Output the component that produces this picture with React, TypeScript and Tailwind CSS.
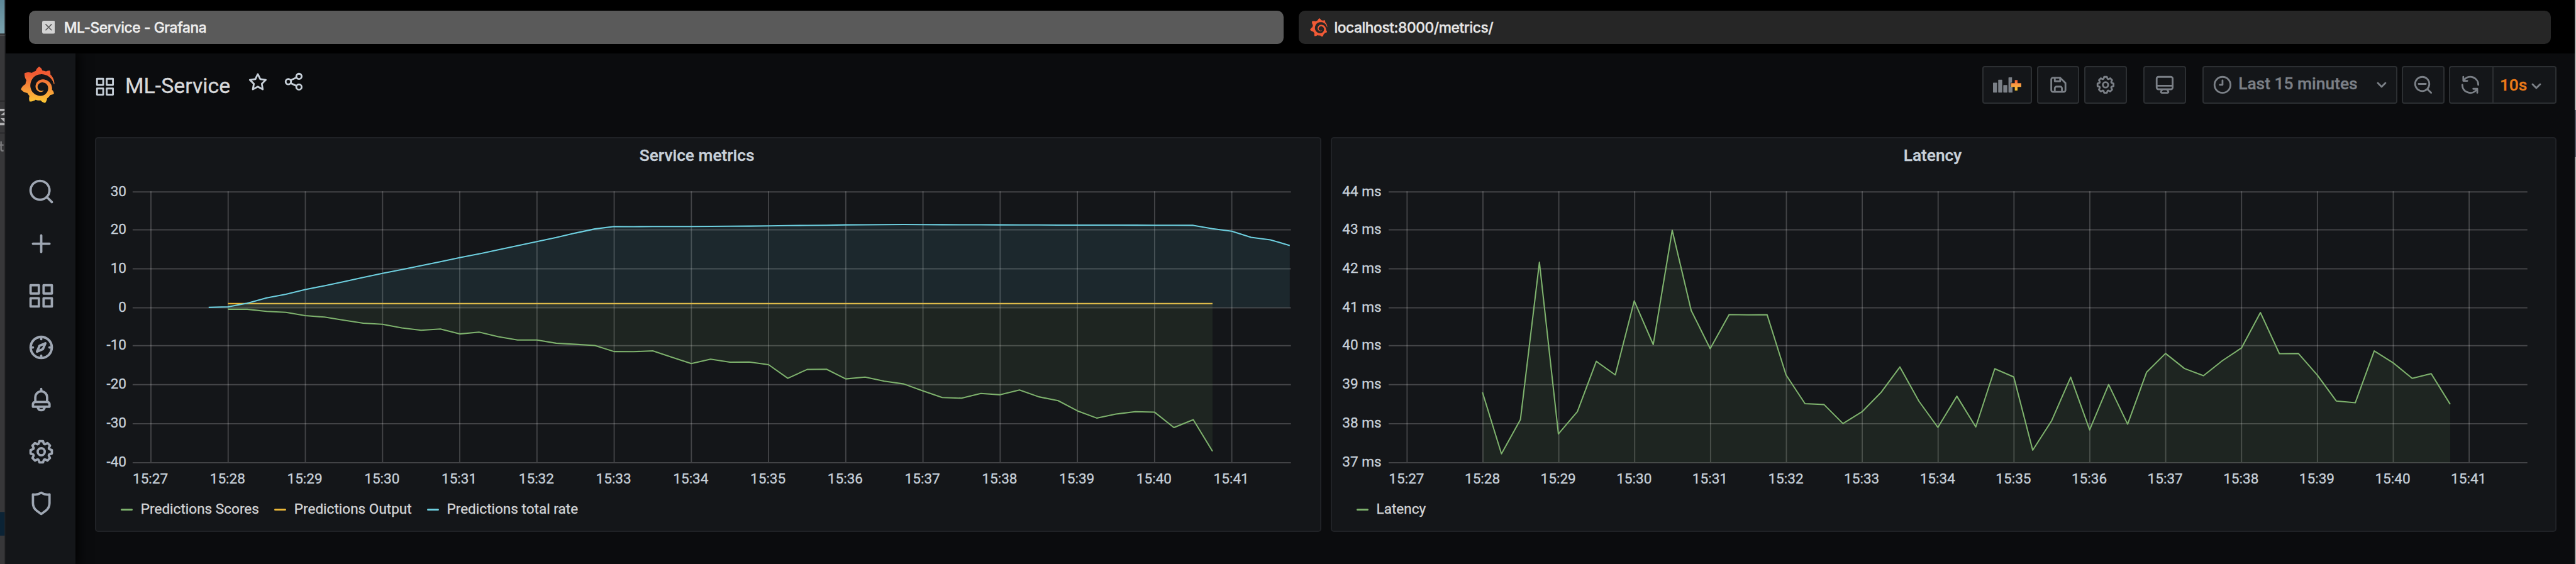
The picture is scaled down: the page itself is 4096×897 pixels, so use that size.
import type { ReactNode } from "react";

/* ---------- icon outlines (24 x 24 grid) ---------- */

const ICONS = {
  apps: "M10,13H3a1,1,0,0,0-1,1v7a1,1,0,0,0,1,1h7a1,1,0,0,0,1-1V14A1,1,0,0,0,10,13ZM9,20H4V15H9ZM21,2H14a1,1,0,0,0-1,1v7a1,1,0,0,0,1,1h7a1,1,0,0,0,1-1V3A1,1,0,0,0,21,2ZM20,9H15V4h5Zm1,4H14a1,1,0,0,0-1,1v7a1,1,0,0,0,1,1h7a1,1,0,0,0,1-1V14A1,1,0,0,0,21,13Zm-1,7H15V15h5ZM10,2H3A1,1,0,0,0,2,3v7a1,1,0,0,0,1,1h7a1,1,0,0,0,1-1V3A1,1,0,0,0,10,2ZM9,9H4V4H9Z",
  search:
    "M21.71,20.29,18,16.61A9,9,0,1,0,16.61,18l3.68,3.68a1,1,0,0,0,1.42,0A1,1,0,0,0,21.71,20.29ZM11,18a7,7,0,1,1,7-7A7,7,0,0,1,11,18Z",
  plus: "M19,11H13V5a1,1,0,0,0-2,0v6H5a1,1,0,0,0,0,2h6v6a1,1,0,0,0,2,0V13h6a1,1,0,0,0,0-2Z",
  compass:
    "M12,2A10,10,0,1,0,22,12,10,10,0,0,0,12,2Zm1,17.93V19a1,1,0,0,0-2,0v.93A8,8,0,0,1,4.07,13H5a1,1,0,0,0,0-2H4.07A8,8,0,0,1,11,4.07V5a1,1,0,0,0,2,0V4.07A8,8,0,0,1,19.93,11H19a1,1,0,0,0,0,2h.93A8,8,0,0,1,13,19.93ZM15.14,7.55l-5,2.12a1,1,0,0,0-.52.52l-2.12,5a1,1,0,0,0,.21,1.1,1,1,0,0,0,.7.29.93.93,0,0,0,.4-.08l5-2.12a1,1,0,0,0,.52-.52l2.12-5a1,1,0,0,0-1.31-1.31Zm-2.49,5.1-2.28,1,1-2.28,2.28-1Z",
  bell: "M18,13.18V10a6,6,0,0,0-5-5.91V3a1,1,0,0,0-2,0V4.09A6,6,0,0,0,6,10v3.18A3,3,0,0,0,4,16v2a1,1,0,0,0,1,1H8.14a4,4,0,0,0,7.72,0H19a1,1,0,0,0,1-1V16A3,3,0,0,0,18,13.18ZM8,10a4,4,0,0,1,8,0v3H8Zm4,10a2,2,0,0,1-1.72-1h3.44A2,2,0,0,1,12,20Zm6-3H6V16a1,1,0,0,1,1-1H17a1,1,0,0,1,1,1Z",
  cog: "M21.32,9.55l-1.89-.63.89-1.78A1,1,0,0,0,20.13,6L18,3.87a1,1,0,0,0-1.15-.19l-1.78.89-.63-1.89A1,1,0,0,0,13.5,2h-3a1,1,0,0,0-.95.68L8.92,4.57,7.14,3.68A1,1,0,0,0,6,3.87L3.87,6a1,1,0,0,0-.19,1.15l.89,1.78-1.89.63A1,1,0,0,0,2,10.5v3a1,1,0,0,0,.68.95l1.89.63-.89,1.78A1,1,0,0,0,3.87,18L6,20.13a1,1,0,0,0,1.15.19l1.78-.89.63,1.89a1,1,0,0,0,.95.68h3a1,1,0,0,0,.95-.68l.63-1.89,1.78.89A1,1,0,0,0,18,20.13L20.13,18a1,1,0,0,0,.19-1.15l-.89-1.78,1.89-.63A1,1,0,0,0,22,13.5v-3A1,1,0,0,0,21.32,9.55ZM20,12.78l-1.2.4A2,2,0,0,0,17.64,16l.57,1.14-1.1,1.1L16,17.64a2,2,0,0,0-2.79,1.16l-.4,1.2H11.22l-.4-1.2A2,2,0,0,0,8,17.64l-1.14.57-1.1-1.1L6.36,16A2,2,0,0,0,5.2,13.18L4,12.78V11.22l1.2-.4A2,2,0,0,0,6.36,8L5.79,6.89l1.1-1.1L8,6.36A2,2,0,0,0,10.82,5.2l.4-1.2h1.56l.4,1.2A2,2,0,0,0,16,6.36l1.14-.57,1.1,1.1L17.64,8a2,2,0,0,0,1.16,2.79l1.2.4ZM12,8a4,4,0,1,0,4,4A4,4,0,0,0,12,8Zm0,6a2,2,0,1,1,2-2A2,2,0,0,1,12,14Z",
  shield:
    "M19.63,3.65a1,1,0,0,0-.84-.2,8,8,0,0,1-6.22-1.27,1,1,0,0,0-1.14,0A8,8,0,0,1,5.21,3.45a1,1,0,0,0-.84.2A1,1,0,0,0,4,4.43v7.45a9,9,0,0,0,3.77,7.33l3.65,2.6a1,1,0,0,0,1.16,0l3.65-2.6A9,9,0,0,0,20,11.88V4.43A1,1,0,0,0,19.63,3.65ZM18,11.88a7,7,0,0,1-2.93,5.7L12,19.77,8.93,17.58A7,7,0,0,1,6,11.88V5.58a10,10,0,0,0,6-1.39,10,10,0,0,0,6,1.39Z",
  star: "M22,9.67A1,1,0,0,0,21.14,9l-5.69-.83L12.9,3a1,1,0,0,0-1.8,0L8.55,8.16,2.86,9a1,1,0,0,0-.81.68,1,1,0,0,0,.25,1l4.13,4-1,5.68A1,1,0,0,0,6.9,21.44L12,18.77l5.1,2.67a.93.93,0,0,0,.46.12,1,1,0,0,0,.59-.19,1,1,0,0,0,.4-1l-1-5.68,4.13-4A1,1,0,0,0,22,9.67Zm-6.15,4a1,1,0,0,0-.29.88l.72,4.2-3.76-2a1.06,1.06,0,0,0-.94,0l-3.76,2,.72-4.2a1,1,0,0,0-.29-.88l-3-3,4.21-.61a1,1,0,0,0,.76-.55L12,5.7l1.88,3.82a1,1,0,0,0,.76.55l4.21.61Z",
  share:
    "M18,14a4,4,0,0,0-3.08,1.48l-5.1-2.35a3.64,3.64,0,0,0,0-2.26l5.1-2.35A4,4,0,1,0,14,6a4.17,4.17,0,0,0,.07.71L8.79,9.14a4,4,0,1,0,0,5.72l5.28,2.43A4.17,4.17,0,0,0,14,18a4,4,0,1,0,4-4ZM18,4a2,2,0,1,1-2,2A2,2,0,0,1,18,4ZM6,14a2,2,0,1,1,2-2A2,2,0,0,1,6,14Zm12,6a2,2,0,1,1,2-2A2,2,0,0,1,18,20Z",
  save: "M20.71,9.29l-6-6a1,1,0,0,0-.32-.21A1.09,1.09,0,0,0,14,3H6A3,3,0,0,0,3,6V18a3,3,0,0,0,3,3H18a3,3,0,0,0,3-3V10A1,1,0,0,0,20.71,9.29ZM9,5h4V7H9Zm6,14H9V16a1,1,0,0,1,1-1h4a1,1,0,0,1,1,1Zm4-1a1,1,0,0,1-1,1H17V16a3,3,0,0,0-3-3H10a3,3,0,0,0-3,3v3H6a1,1,0,0,1-1-1V6A1,1,0,0,1,6,5H7V8A1,1,0,0,0,8,9h6a1,1,0,0,0,1-1V6.41l4,4Z",
  monitor:
    "M19,2H5A3,3,0,0,0,2,5V15a3,3,0,0,0,3,3H7.64l-.58,1a2,2,0,0,0,0,2,2,2,0,0,0,1.75,1h6.46A2,2,0,0,0,17,21a2,2,0,0,0,0-2l-.59-1H19a3,3,0,0,0,3-3V5A3,3,0,0,0,19,2ZM8.77,20,10,18H14l1.2,2ZM20,15a1,1,0,0,1-1,1H5a1,1,0,0,1-1-1V14H20Zm0-3H4V5A1,1,0,0,1,5,4H19a1,1,0,0,1,1,1Z",
  clock:
    "M12,2A10,10,0,1,0,22,12,10,10,0,0,0,12,2Zm0,18a8,8,0,1,1,8-8A8,8,0,0,1,12,20ZM12,6a1,1,0,0,0-1,1v4H9a1,1,0,0,0,0,2h3a1,1,0,0,0,1-1V7A1,1,0,0,0,12,6Z",
  angleDown:
    "M17,9.17a1,1,0,0,0-1.41,0L12,12.71,8.46,9.17a1,1,0,0,0-1.41,0,1,1,0,0,0,0,1.42l4.24,4.24a1,1,0,0,0,1.42,0L17,10.59A1,1,0,0,0,17,9.17Z",
  zoomOut:
    "M21.71,20.29,18,16.61A9,9,0,1,0,16.61,18l3.68,3.68a1,1,0,0,0,1.42,0A1,1,0,0,0,21.71,20.29ZM11,18a7,7,0,1,1,7-7A7,7,0,0,1,11,18Zm4-8H7a1,1,0,0,0,0,2h8a1,1,0,0,0,0-2Z",
  sync: "M19.91,15.51H15.38a1,1,0,0,0,0,2h2.4A8,8,0,0,1,4,12a1,1,0,0,0-2,0,10,10,0,0,0,16.88,7.23V21a1,1,0,0,0,2,0V16.5A1,1,0,0,0,19.91,15.51ZM12,2A10,10,0,0,0,5.12,4.77V3a1,1,0,0,0-2,0V7.5a1,1,0,0,0,1,1h4.5a1,1,0,0,0,0-2H6.22A8,8,0,0,1,20,12a1,1,0,0,0,2,0A10,10,0,0,0,12,2Z",
};

function Icon({ name, className }: { name: keyof typeof ICONS; className: string }) {
  return (
    <svg viewBox="0 0 24 24" fill="currentColor" className={`shrink-0 ${className}`}>
      <path d={ICONS[name]} />
    </svg>
  );
}

const LOGO_PATH =
  "M23.02 10.59a8.578 8.578 0 0 0-.862-3.034 8.911 8.911 0 0 0-1.789-2.445c.337-1.342-.413-2.505-.413-2.505-1.292-.08-2.113.4-2.416.62-.052-.02-.102-.044-.154-.064-.22-.089-.446-.172-.677-.247-.231-.073-.47-.14-.711-.197a9.867 9.867 0 0 0-.875-.161C14.557.753 12.94 0 12.94 0c-1.804 1.145-2.147 2.744-2.147 2.744l-.018.093c-.098.029-.2.057-.298.088-.138.042-.275.094-.413.143-.138.055-.275.107-.41.166a8.869 8.869 0 0 0-1.557.87l-.063-.029c-2.497-.955-4.716.195-4.716.195-.203 2.658.996 4.33 1.235 4.636a11.608 11.608 0 0 0-.607 2.635C1.636 12.677.953 15.014.953 15.014c1.926 2.214 4.171 2.351 4.171 2.351.003-.002.006-.002.006-.005.285.509.615.994.986 1.446.156.19.32.371.488.548-.704 2.009.099 3.68.099 3.68 2.144.08 3.553-.937 3.849-1.173a9.784 9.784 0 0 0 3.164.501h.08l.055-.003.107-.002.103-.005.003.002c1.01 1.44 2.788 1.646 2.788 1.646 1.264-1.332 1.337-2.653 1.337-2.94v-.058c0-.02-.003-.039-.003-.06.265-.187.52-.387.758-.6a7.875 7.875 0 0 0 1.415-1.7c1.43.083 2.437-.885 2.437-.885-.236-1.49-1.085-2.216-1.264-2.354l-.018-.013-.016-.013a.217.217 0 0 1-.031-.02c.008-.092.016-.18.02-.27.011-.162.016-.323.016-.48v-.253l-.005-.098-.008-.135a1.891 1.891 0 0 0-.01-.13c-.003-.042-.008-.083-.013-.125l-.016-.124-.018-.122a6.215 6.215 0 0 0-2.032-3.73 6.015 6.015 0 0 0-3.222-1.46 6.292 6.292 0 0 0-.85-.048l-.107.002h-.063l-.044.003-.104.008a4.777 4.777 0 0 0-3.335 1.695c-.332.4-.592.84-.768 1.297a4.594 4.594 0 0 0-.312 1.817l.003.091c.005.055.007.11.013.164a3.615 3.615 0 0 0 .698 1.82 3.53 3.53 0 0 0 1.827 1.282c.33.098.66.14.971.137.039 0 .078 0 .114-.002l.063-.003c.02 0 .041-.003.062-.003.034-.002.065-.007.099-.01.007 0 .018-.003.028-.003l.031-.005.06-.008a1.18 1.18 0 0 0 .112-.02c.036-.008.072-.013.109-.024a2.634 2.634 0 0 0 .914-.415c.028-.02.056-.041.085-.065a.248.248 0 0 0 .039-.35.244.244 0 0 0-.309-.06l-.078.042c-.09.044-.184.083-.283.116a2.476 2.476 0 0 1-.475.096c-.028.003-.054.006-.083.006l-.083.002c-.026 0-.054 0-.08-.002l-.102-.006h-.012l-.024.006c-.016-.003-.031-.003-.044-.006-.031-.002-.06-.007-.091-.01a2.59 2.59 0 0 1-.724-.213 2.557 2.557 0 0 1-.667-.438 2.52 2.52 0 0 1-.805-1.475 2.306 2.306 0 0 1-.029-.444l.006-.122v-.023l.002-.031c.003-.021.003-.04.005-.06a3.163 3.163 0 0 1 1.352-2.29 3.12 3.12 0 0 1 .937-.43 2.946 2.946 0 0 1 .776-.101h.06l.07.002.045.003h.026l.07.005a4.041 4.041 0 0 1 1.635.49 3.94 3.94 0 0 1 1.602 1.662 3.77 3.77 0 0 1 .397 1.414l.005.076.003.075c.002.026.002.05.002.075 0 .024.003.052 0 .07v.065l-.002.073-.008.174a6.195 6.195 0 0 1-.08.639 5.1 5.1 0 0 1-.267.927 5.31 5.31 0 0 1-.624 1.13 5.052 5.052 0 0 1-3.237 2.014 4.82 4.82 0 0 1-.649.066l-.039.003h-.287a6.607 6.607 0 0 1-1.716-.265 6.776 6.776 0 0 1-3.4-2.274 6.75 6.75 0 0 1-.746-1.15 6.616 6.616 0 0 1-.714-2.596l-.005-.083-.002-.02v-.056l-.003-.073v-.096l-.003-.104v-.07l.003-.163c.008-.22.026-.45.054-.678a8.707 8.707 0 0 1 .28-1.355c.128-.444.286-.872.473-1.277a7.04 7.04 0 0 1 1.456-2.1 5.925 5.925 0 0 1 .953-.763c.169-.111.343-.213.524-.306.089-.05.182-.091.273-.135.047-.02.093-.042.138-.062a7.177 7.177 0 0 1 .714-.267l.145-.045c.049-.015.098-.026.148-.041.098-.029.197-.052.296-.076.049-.013.1-.02.15-.033l.15-.032.151-.028.076-.013.075-.01.153-.024c.057-.01.114-.013.171-.023l.169-.021c.036-.003.073-.008.106-.01l.073-.008.036-.003.042-.002c.057-.003.114-.008.171-.01l.086-.006h.023l.037-.003.145-.007a7.999 7.999 0 0 1 1.708.125 7.917 7.917 0 0 1 2.048.68 8.253 8.253 0 0 1 1.672 1.09l.09.077.089.078c.06.052.114.107.171.159.057.052.112.106.166.16.052.055.107.107.159.164a8.671 8.671 0 0 1 1.41 1.978c.012.026.028.052.04.078l.04.078.075.156c.023.051.05.1.07.153l.065.15a8.848 8.848 0 0 1 .45 1.34.19.19 0 0 0 .201.142.186.186 0 0 0 .172-.184c.01-.246.002-.532-.024-.856z";

function GrafanaLogo({ className, flat }: { className: string; flat?: boolean }) {
  return (
    <svg viewBox="0 0 24 24" className={`shrink-0 ${className}`}>
      <defs>
        <linearGradient id="logoFill" x1="0" y1="1" x2="0" y2="0">
          <stop offset="0" stopColor="#fcc934" />
          <stop offset="0.3" stopColor="#f9a03a" />
          <stop offset="0.8" stopColor="#f05a33" />
          <stop offset="1" stopColor="#f05a33" />
        </linearGradient>
      </defs>
      <path d={LOGO_PATH} fill={flat ? "#f15a36" : "url(#logoFill)"} />
    </svg>
  );
}

function AddPanelIcon() {
  return (
    <svg viewBox="0 0 48 28" className="h-[26.3px] w-[45.1px] shrink-0">
      <defs>
        <linearGradient id="plusFill" x1="0" y1="0" x2="0" y2="1">
          <stop offset="0" stopColor="#f0542c" />
          <stop offset="0.45" stopColor="#f99a45" />
          <stop offset="1" stopColor="#fbc92c" />
        </linearGradient>
      </defs>
      <g fill="#7b8087">
        <rect x="0" y="10.2" width="6.8" height="16.8" rx="0.8" />
        <rect x="8.8" y="5" width="6.8" height="22" rx="0.8" />
        <rect x="17.4" y="14" width="6.8" height="13" rx="0.8" />
        <path d="M27,1h5.2v9.2h-2.6v6.8h3.4V27h-6a.8.8,0,0,1-.8-.8V1.8A.8.8,0,0,1,27,1Z" />
      </g>
      <path
        d="M36.9,5.5h4.6v5.5h6.3v6.4h-6.3v5.9h-4.6v-5.9h-6.3v-6.4h6.3Z"
        fill="url(#plusFill)"
      />
    </svg>
  );
}

/* ---------- browser chrome ---------- */

function DesktopEdge() {
  return (
    <svg viewBox="0 0 9 954" preserveAspectRatio="none" className="h-full w-[8.5px] shrink-0">
      <defs>
        <linearGradient id="edgeSky" x1="0" y1="0" x2="0" y2="1">
          <stop offset="0" stopColor="#5d8797" />
          <stop offset="1" stopColor="#7ba2ae" />
        </linearGradient>
      </defs>
      <rect width="9" height="954" fill="#373739" />
      <rect width="8" height="57" fill="url(#edgeSky)" />
      <rect y="57" width="9" height="1.5" fill="#161616" />
      <rect y="58.5" width="9" height="1.5" fill="#6a6a6c" />
      <rect y="170" width="9" height="2" fill="#29292b" />
      <rect y="224" width="9" height="2" fill="#29292b" />
      <path d="M0,184h8v4H0ZM0,208h8v4H0ZM8,189v6H1ZM1,200H8v7Z" fill="#b4b4b6" />
      <path d="M0,244h6v2.5H3v6q0,1.5,3,1v2.5q-5,1-5.5-2.5v-7H0ZM.5,239H3v5H.5Z" fill="#7b7b7d" />
      <rect y="866" width="8" height="40" fill="#0b2335" />
      <rect x="8" width="1" height="954" fill="#1c1c1e" />
    </svg>
  );
}

function DesktopRightEdge() {
  return (
    <div className="flex w-[2px] shrink-0 flex-col bg-[#a3a3a3]">
      <div className="h-[175px] bg-[#b2b2b2]" />
      <div className="h-[75px] bg-[#5b5c66]" />
    </div>
  );
}

function TabBar() {
  return (
    <div className="flex h-[84.6px] shrink-0 gap-[24.4px] bg-black pt-[17px] pr-[37.6px] pl-[37px] font-['Inter',sans-serif] text-[22.8px] leading-[30px] font-medium">
      <div className="flex h-[52.6px] w-0 flex-1 items-center rounded-[10px] bg-[#5a5a5a] pl-[21px]">
        <svg viewBox="0 0 22 22" className="mt-[0.5px] size-[20.6px]">
          <rect width="22" height="22" rx="3" fill="#d3d3d3" />
          <path d="M6.3,6.3 L15.7,15.7 M15.7,6.3 L6.3,15.7" stroke="#5a5a5a" strokeWidth="1.7" strokeLinecap="round" />
        </svg>
        <span className="mt-[1.6px] ml-[14.6px] tracking-[-0.42px] whitespace-nowrap text-[#eeeeee]">
          ML-Service - Grafana
        </span>
      </div>
      <div className="flex h-[52.6px] w-0 flex-1 items-center rounded-[10px] bg-[#262626] pl-[16.5px]">
        <GrafanaLogo flat className="size-[29.6px]" />
        <span className="mt-[1.6px] ml-[10px] tracking-[-0.45px] whitespace-nowrap text-[#e6e6e6]">
          localhost:8000/metrics/
        </span>
      </div>
    </div>
  );
}

/* ---------- dashboard frame ---------- */

const MENU: (keyof typeof ICONS)[] = ["search", "plus", "apps", "compass", "bell", "cog", "shield"];

function SideMenu() {
  return (
    <nav className="z-10 flex w-[111.9px] shrink-0 flex-col items-center bg-[#141619] pt-[21.2px] shadow-[0_0_18px_4px_#000000]">
      <GrafanaLogo className="mr-[8.4px] size-[57.8px]" />
      <div className="mt-[118.5px] ml-[2.4px] flex flex-col gap-[37.65px]">
        {MENU.map((name) => (
          <Icon key={name} name={name} className="size-[45.1px] text-[#9fa7b3]" />
        ))}
      </div>
    </nav>
  );
}

function ToolButton({ className, children }: { className: string; children: ReactNode }) {
  return (
    <div
      className={`flex h-[60.2px] shrink-0 items-center rounded-[4px] border-2 border-[#2c2f32] bg-[#141619] text-[#7b8087] ${className}`}
    >
      {children}
    </div>
  );
}

function Toolbar() {
  return (
    <header className="flex h-[133.5px] shrink-0 items-start pt-[20.7px] pr-[28.6px] pl-[30px]">
      <div className="flex items-start text-[#c7d0d9]">
        <Icon name="apps" className="mt-[15.9px] size-[33.85px]" />
        <h1 className="mt-[11.7px] ml-[14.8px] text-[33.85px] leading-[40px] font-normal whitespace-nowrap text-[#d8d9da]">
          ML-Service
        </h1>
        <Icon name="star" className="mt-[7.5px] ml-[27.3px] size-[33.85px]" />
        <Icon name="share" className="mt-[7.5px] ml-[22.6px] size-[33.85px]" />
      </div>
      <div className="ml-auto flex">
        <ToolButton className="w-[79.4px] pl-[15.3px]">
          <AddPanelIcon />
        </ToolButton>
        <ToolButton className="ml-[7.5px] w-[67.7px] justify-center">
          <Icon name="save" className="size-[33.85px]" />
        </ToolButton>
        <ToolButton className="ml-[7.5px] w-[67.7px] justify-center">
          <Icon name="cog" className="size-[33.85px]" />
        </ToolButton>
        <ToolButton className="ml-[26.3px] w-[67.7px] justify-center">
          <Icon name="monitor" className="size-[33.85px]" />
        </ToolButton>
        <ToolButton className="ml-[26.7px] w-[310px] pl-[12.9px]">
          <Icon name="clock" className="size-[33.85px]" />
          <span className="ml-[8.2px] pb-[4px] text-[26.4px] leading-[32px] font-medium whitespace-nowrap">
            Last 15 minutes
          </span>
          <Icon name="angleDown" className="mr-[6.8px] ml-auto size-[33.85px]" />
        </ToolButton>
        <ToolButton className="ml-[7px] w-[67.7px] justify-center">
          <Icon name="zoomOut" className="mr-[1px] size-[33.85px]" />
        </ToolButton>
        <ToolButton className="ml-[7.5px] w-[68.5px] justify-center rounded-r-none border-r-0">
          <Icon name="sync" className="mr-[3px] size-[33.85px]" />
        </ToolButton>
        <ToolButton className="w-[102.5px] rounded-l-none pl-[10px]">
          <span className="text-[26.3px] leading-[32px] font-medium text-[#eb7b18]">10s</span>
          <Icon name="angleDown" className="mt-[4px] ml-[-2.2px] size-[33.85px]" />
        </ToolButton>
      </div>
    </header>
  );
}

/* ---------- charts ---------- */

type Line = { color: string; start: number; ys: number[] };

type ChartSpec = {
  left: number;
  right: number;
  firstTick: number;
  tickGap: number;
  labelRight: number;
  yLabels: string[];
  step: number;
  base: number;
  lines: Line[];
};

const ROWS = [325, 389, 455, 521, 585, 651, 717, 783];
const TIMES = Array.from({ length: 15 }, (_, i) => `15:${27 + i}`);

const SERVICE: ChartSpec = {
  left: 224,
  right: 2183,
  firstTick: 255,
  tickGap: 130.57,
  labelRight: 213.5,
  yLabels: ["30", "20", "10", "0", "-10", "-20", "-30", "-40"],
  step: 32.65,
  base: 520.6,
  lines: [
    {
      color: "#7EB26D",
      start: 385.3,
      ys: [
        523.5, 523.5, 527, 528.7, 534.3, 536.7, 542, 547, 548.8, 554.9, 559, 556.8, 565.2, 562.1,
        569.8, 575.5, 575.4, 580.9, 582.8, 584.7, 595, 595.2, 593.9, 604.6, 615.3, 608, 613, 612.6,
        617.2, 640.2, 625.3, 624.9, 641.3, 638.3, 645.2, 649.8, 661.6, 672.7, 673.9, 665.8, 668.1,
        660.1, 671.6, 678.1, 695.3, 707.5, 700.7, 696.8, 697.6, 723.6, 710.2, 763.8,
      ],
    },
    { color: "#EAB839", start: 385.3, ys: Array.from({ length: 52 }, () => 513.9) },
    {
      color: "#6ED0E0",
      start: 352.6,
      ys: [
        520.3, 519.3, 513.3, 504.3, 498, 490, 483.7, 476.7, 469.6, 462.6, 456.3, 449.6, 443.1,
        436.1, 429.8, 422.8, 416, 409, 402.2, 394.5, 387.6, 383.4, 383.7, 383.4, 383.4, 383.4,
        383.2, 383, 382.8, 382.5, 381.9, 381.6, 381.3, 380.7, 380.6, 380.2, 380.1, 380.2, 380.4,
        380.5, 380.6, 380.7, 380.8, 380.9, 381, 381, 381, 381, 381.2, 381.3, 381.4, 381.5, 387.3,
        391.5, 401.8, 406, 415.6,
      ],
    },
  ],
};

const LATENCY: ChartSpec = {
  left: 2348,
  right: 4274,
  firstTick: 2379.3,
  tickGap: 128.3,
  labelRight: 2336,
  yLabels: ["44 ms", "43 ms", "42 ms", "41 ms", "40 ms", "39 ms", "38 ms", "37 ms"],
  step: 32.09,
  base: 783,
  lines: [
    {
      color: "#7EB26D",
      start: 2506.8,
      ys: [
        664, 768, 709.9, 443.9, 734.4, 696.5, 611.5, 634.5, 509.3, 583.2, 389.9, 525.4, 590.1,
        532.3, 532.9, 532.7, 634.5, 683.1, 684.6, 716.8, 696.9, 664.3, 621.1, 678.9, 723.3, 670.5,
        722.5, 624.1, 637.9, 761.9, 711.8, 638.3, 727.5, 650.9, 717.9, 629.9, 598.2, 623.7, 635.8,
        610.3, 589, 529, 598.6, 598.2, 634.9, 678.7, 681.6, 594, 614.1, 640.3, 632.4, 684.1,
      ],
    },
  ],
};

function Chart({ spec, viewBox }: { spec: ChartSpec; viewBox: string }) {
  const { left, right, firstTick, tickGap, labelRight, yLabels, step, base, lines } = spec;
  return (
    <svg viewBox={viewBox} className="block h-[488.9px] w-full font-['Roboto',sans-serif]">
      <g stroke="#ffffff" strokeOpacity="0.2" strokeWidth="2">
        {ROWS.map((y) => (
          <path key={y} d={`M${left} ${y}H${right}`} />
        ))}
        {TIMES.map((t, i) => (
          <path key={t} d={`M${firstTick + i * tickGap} 324V782`} />
        ))}
      </g>
      {lines.map(({ color, start, ys }) => {
        const points = ys.map((y, i) => `${(start + i * step).toFixed(1)},${y}`).join(" ");
        const end = start + (ys.length - 1) * step;
        return (
          <g key={color}>
            <polygon points={`${start},${base} ${points} ${end},${base}`} fill={color} fillOpacity="0.1" />
            <polyline points={points} fill="none" stroke={color} strokeWidth="2.2" strokeLinejoin="round" />
          </g>
        );
      })}
      <g fill="#c7d0d9" stroke="#c7d0d9" strokeWidth="0.35" fontSize="24">
        {yLabels.map((label, i) => (
          <text key={label} x={labelRight} y={ROWS[i] + 6.8} textAnchor="end">
            {label}
          </text>
        ))}
        {TIMES.map((t, i) => (
          <text key={t} x={firstTick + i * tickGap - 1} y="818" textAnchor="middle">
            {t}
          </text>
        ))}
      </g>
    </svg>
  );
}

function Legend({ items, className }: { items: [string, string][]; className: string }) {
  return (
    <div className={`flex items-center gap-[23.8px] ${className}`}>
      {items.map(([label, dash]) => (
        <div key={label} className="flex items-center">
          <span className={`h-[3.8px] w-[19.2px] rounded-full ${dash}`} />
          <span className="ml-[12.8px] text-[22.57px] leading-[28px] whitespace-nowrap text-[#d3d4d6]">
            {label}
          </span>
        </div>
      ))}
    </div>
  );
}

function Panel({ title, className, children }: { title: string; className: string; children: ReactNode }) {
  return (
    <section
      className={`flex h-[628.1px] shrink-0 flex-col overflow-hidden rounded-[5px] border-2 border-[#202226] bg-[#141619] ${className}`}
    >
      <h2 className="h-[66.1px] shrink-0 pt-[12px] pr-[35px] text-center text-[26.3px] leading-[30px] font-medium text-[#c7d0d9]">
        {title}
      </h2>
      {children}
    </section>
  );
}

export default function App() {
  return (
    <div className="flex h-[897px] w-[4096px] overflow-hidden bg-black font-['Roboto',sans-serif] [-webkit-text-stroke:0.33px]">
      <DesktopEdge />
      <div className="flex w-0 flex-1 flex-col">
        <TabBar />
        <div className="flex h-0 flex-1 overflow-hidden">
          <SideMenu />
          <main className="flex w-0 flex-1 flex-col bg-[#0b0c0e]">
            <Toolbar />
            <div className="flex gap-[15px] pl-[30.4px]">
              <Panel title="Service metrics" className="w-[1949.8px]">
                <Chart spec={SERVICE} viewBox="162.5 304.5 2069.5 520" />
                <Legend
                  className="mt-[21.4px] ml-[39px]"
                  items={[
                    ["Predictions Scores", "bg-[#7EB26D]"],
                    ["Predictions Output", "bg-[#EAB839]"],
                    ["Predictions total rate", "bg-[#6ED0E0]"],
                  ]}
                />
              </Panel>
              <Panel title="Latency" className="w-[1949.8px]">
                <Chart spec={LATENCY} viewBox="2252.4 304.5 2069.5 520" />
                <Legend className="mt-[21.4px] ml-[39px]" items={[["Latency", "bg-[#7EB26D]"]]} />
              </Panel>
            </div>
          </main>
        </div>
      </div>
      <DesktopRightEdge />
    </div>
  );
}
